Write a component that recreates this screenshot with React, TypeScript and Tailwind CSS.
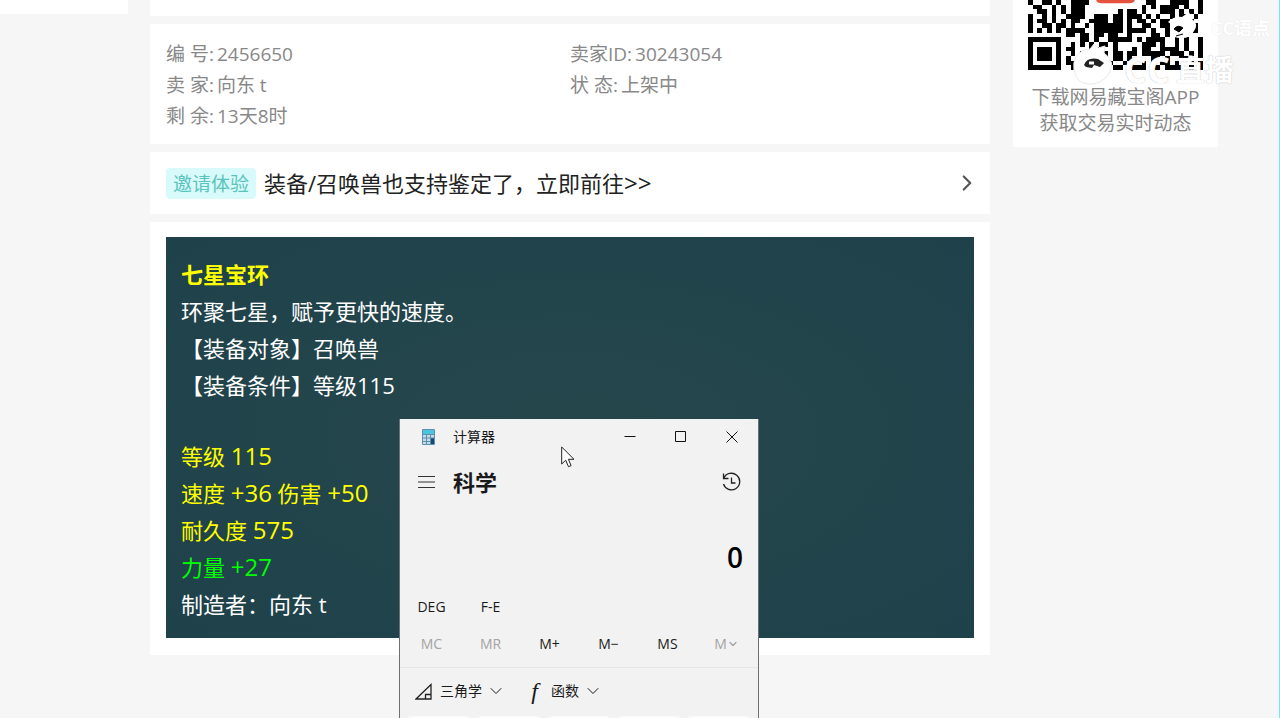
import { ChevronDown, ChevronRight } from 'lucide-react'

interface InfoItem {
  label: string
  value: string
}

const leftInfo: InfoItem[] = [
  { label: '编 号:', value: '2456650' },
  { label: '卖 家:', value: '向东 t' },
  { label: '剩 余:', value: '13天8时' },
]

const rightInfo: InfoItem[] = [
  { label: '卖家ID:', value: '30243054' },
  { label: '状 态:', value: '上架中' },
]

const memoryKeys = [
  { label: 'MC', disabled: true },
  { label: 'MR', disabled: true },
  { label: 'M+', disabled: false },
  { label: 'M−', disabled: false },
  { label: 'MS', disabled: false },
]

// Lower rows of the code, one character per module
const qrRows = [
  '#..##.#..####............##...####..#',
  '.##..#.#.###............#.#.####.#..#',
  '..##.#.#.###.......#.##.#...###.#.#.#',
  '#..#.#..####..###.##.###.#.#..#.##.#.',
  '#.##.#.#.##..####.##.#.##.#.##....#..',
  '#..##.##.#..#.######.#..##..##.#..##.',
  '#.#.#.#.####..######.####.#..#..#.##.',
  '........##.##.##.##..#....##.#.##....',
  '#######....##.#..#####.#.####..#.#..#',
  '#.....#..#.#.#.##.#.....###.#..#.#..#',
  '#.###.#.##...###..#...#.##..####.#..#',
  '#.###.#..#.###.##.##.##.#####.###.#.#',
  '#.###.#.#..##.###.##.#....##.#..##..#',
  '#.....#.###.#.####..#...#.#.##.#..#.#',
  '#######..##..###..##..###.##.####.#.#',
]

function QrCode() {
  return (
    <svg className="block w-[175px] h-[70px]" viewBox="0 0 37 15" preserveAspectRatio="none" shapeRendering="crispEdges">
      {qrRows.map((row, y) =>
        row.split('').map((cell, x) =>
          cell === '#' ? <rect key={`${x}-${y}`} x={x} y={y} width="1" height="1" fill="#000" /> : null,
        ),
      )}
      <path d="M13 0h11v.6q0 1.1-1.2 1.1h-8.6q-1.2 0-1.2-1.1z" fill="#fff" />
      <path d="M14.400 0h8.200q-.2 .7-1.200 .7h-5.800q-1 0-1.200-.7z" fill="#e5533f" shapeRendering="auto" />
    </svg>
  )
}

function Watermark() {
  return (
    <div className="absolute top-3 left-[1070px] w-[204px] h-20 pointer-events-none text-white">
      <svg className="absolute inset-0 w-full h-full" viewBox="0 0 204 80">
        <path d="M98 10q6-6 14-5l7-5 3 7q7 5 2 12-4 8-14 7-11-1-8-8 3-4-4-8z" fill="#fff" />
        <path d="M104 17q4-5 9-1l-4 4zM106 24l7-2" fill="#000" stroke="#000" />
        <path d="M4 58q-2-15 10-20l6-1 4-5 4 4 7-2-1 7q13 9 4 22-8 10-20 9-12-1-14-14z" fill="#fff" stroke="#eaeaea" strokeWidth="1" />
        <path d="M14 53q3-8 14-6l6 4-4 4-6-2-2 3-6-1z" fill="#222" />
        <path d="M19 51h5" stroke="#fff" strokeWidth="3" />
      </svg>
      <span className="absolute right-1 top-1 text-lg leading-6 font-bold [text-shadow:0_0_1px_#ddd]">CC语点</span>
      <div className="absolute left-[54px] top-[44px] flex items-center gap-1.5 font-bold whitespace-nowrap [text-shadow:0_0_1px_#aaa]">
        <span className="text-4xl leading-7">CC</span>
        <span className="text-[29px] leading-7">直播</span>
      </div>
    </div>
  )
}

function InfoList({ items }: { items: InfoItem[] }) {
  return (
    <dl>
      {items.map((item) => (
        <div key={item.label} className="flex gap-[3px]">
          <dt>{item.label}</dt>
          <dd>{item.value}</dd>
        </div>
      ))}
    </dl>
  )
}

function Num({ children }: { children: string }) {
  return <span className="text-2xl leading-none">{children}</span>
}

function ItemPanel() {
  return (
    <div className="bg-[#20424b] bg-radial from-[#25474c] to-[#1f414a] pl-[15px] pt-[19px] pb-[15px] text-[22px] leading-[37px] text-white">
      <h2 className="font-bold text-[#ffff00]">七星宝环</h2>
      <p>环聚七星，赋予更快的速度。</p>
      <p>【装备对象】召唤兽</p>
      <p>【装备条件】等级115</p>
      <div className="mt-[34px] text-[#ffff00]">
        <p>等级 <Num>115</Num></p>
        <p>速度 <Num>+36</Num> 伤害 <Num>+50</Num></p>
        <p>耐久度 <Num>575</Num></p>
      </div>
      <p className="text-[#00ff00]">力量 <Num>+27</Num></p>
      <p>制造者：向东 t</p>
    </div>
  )
}

function CalculatorIcon() {
  return (
    <svg className="w-[13px] h-4" viewBox="0 0 13 16">
      <rect width="13" height="16" rx="1" fill="#5d8fae" />
      <rect x="1" y="1" width="11" height="4" fill="#4cc3df" />
      <path d="M1 6h3v2.500H1zM5 6h3v2.500H5zM9 6h3v2.500H9zM1 9.500h3v2.500H1zM5 9.500h3v2.500H5zM1 13h3v2H1zM5 13h3v2H5z" fill="#c5dbe6" />
      <path d="M9 9.500h3V15H9z" fill="#174873" />
    </svg>
  )
}

function Calculator() {
  return (
    <section className="absolute left-[399px] top-[419px] w-[360px] bg-[#f2f2f2] border-x border-[#6a7174] text-[#1a1a1a] text-sm">
      {/* Title bar */}
      <div className="flex items-center h-9 pl-[22px] pr-px">
        <CalculatorIcon />
        <span className="ml-[18px]">计算器</span>
        <div className="flex ml-auto">
          <button className="w-[51px] h-9 flex items-center justify-center" aria-label="最小化">
            <svg className="w-3 h-3" viewBox="0 0 12 12" stroke="#111"><path d="M0.500 5.500h11" /></svg>
          </button>
          <button className="w-[51px] h-9 flex items-center justify-center" aria-label="最大化">
            <svg className="w-3 h-3" viewBox="0 0 12 12" stroke="#111" fill="none"><path d="M.5 .5h10v10H.5z" /></svg>
          </button>
          <button className="w-[51px] h-9 flex items-center justify-center" aria-label="关闭">
            <svg className="w-3 h-3" viewBox="0 0 12 12" stroke="#111"><path d="M.5 .5l11 11M11.500 .5L.5 11.500" /></svg>
          </button>
        </div>
      </div>

      {/* Mode header */}
      <div className="flex items-center h-[54px] pl-[18px] pr-4">
        <button aria-label="菜单">
          <svg className="w-[17px] h-3" viewBox="0 0 17 12" stroke="#333"><path d="M0 .5h17M0 6h17M0 11.500h17" /></svg>
        </button>
        <h1 className="ml-[18px] text-[22px] leading-8 font-bold">科学</h1>
        <button className="ml-auto" aria-label="历史记录">
          <svg className="w-5 h-5" viewBox="0 0 20 20" fill="none" stroke="#222" strokeWidth="1.300">
            <path d="M1.500 1.500v5h5M1.800 6.300A8.300 8.300 0 1 1 1.500 12M9.500 5.500V11h4" />
          </svg>
        </button>
      </div>

      <output className="block pt-7 pr-[15px] text-right text-[28px] leading-10 font-semibold text-black">0</output>

      <div className="grid grid-cols-6 px-0.5 mt-3 h-9">
        <button>DEG</button>
        <button>F-E</button>
      </div>
      <div className="grid grid-cols-6 px-0.5 h-[43px] pb-[5px] border-b border-[#e6e6e6]">
        {memoryKeys.map((key) => (
          <button key={key.label} disabled={key.disabled} className="disabled:text-[#a3a3a3]">
            {key.label}
          </button>
        ))}
        <button disabled className="flex items-center justify-center text-[#a3a3a3]">
          M<ChevronDown className="w-3 h-3" strokeWidth={2.5} />
        </button>
      </div>

      {/* Function menus */}
      <div className="flex items-center h-12 pl-[15px] pb-0.5">
        <button className="flex items-center">
          <svg className="w-[17px] h-[17px]" viewBox="0 0 17 17" fill="none" stroke="#222" strokeWidth="1.300">
            <path d="M1 16L16 1.500V16zM10.500 16v-4.500H16" />
          </svg>
          <span className="ml-2">三角学</span>
          <ChevronDown className="ml-1 w-5 h-5" strokeWidth={1.2} />
        </button>
        <button className="flex items-center ml-5">
          <span className="w-[17px] font-['Liberation_Serif',serif] italic text-2xl leading-5">f</span>
          <span className="ml-2">函数</span>
          <ChevronDown className="ml-1 w-5 h-5" strokeWidth={1.2} />
        </button>
      </div>
      <div className="grid grid-cols-5 gap-2 px-2">
        {[1, 2, 3, 4, 5].map((key) => (
          <div key={key} className="h-10 rounded-sm bg-[#fbfbfb]" />
        ))}
      </div>
    </section>
  )
}

export default function App() {
  return (
    <div className="relative h-screen overflow-hidden flex items-start bg-[#f6f6f6] font-['Open_Sans','Noto_Sans_CJK_SC',sans-serif]">
      <aside className="w-32 h-3.5 shrink-0 bg-white" />

      <main className="flex-1 min-w-0 ml-[22px] flex flex-col gap-2">
        <div className="h-4 bg-white" />
        <section className="grid grid-cols-2 px-4 pt-[15px] pb-3 bg-white text-[19px] leading-[31px] text-[#888]">
          <InfoList items={leftInfo} />
          <InfoList items={rightInfo} />
        </section>
        <a href="#" className="flex items-center h-[62px] px-4 bg-white text-[22px] text-[#222]">
          <span className="h-[31px] px-[7px] rounded bg-[#d9fafa] text-[19px] leading-[33px] text-[#58c4bd]">邀请体验</span>
          <span className="ml-2">装备/召唤兽也支持鉴定了，立即前往<Num>&gt;&gt;</Num></span>
          <ChevronRight className="ml-auto -mr-1.5 w-[26px] h-[26px] text-[#555]" strokeWidth={2} />
        </a>
        <section className="px-4 pt-[15px] pb-[17px] bg-white">
          <ItemPanel />
        </section>
      </main>

      <aside className="w-[205px] shrink-0 ml-[23px] pb-[11px] bg-white flex flex-col items-center text-center text-[19px] leading-[26px] text-[#888]">
        <QrCode />
        <p className="mt-3.5">
          下载网易藏宝阁APP
          <br />
          获取交易实时动态
        </p>
      </aside>

      <div className="w-1.5 h-screen shrink-0 ml-14 bg-[#f4f6fb] border-r border-[#7fe3e8]" />

      <Watermark />
      <Calculator />

      {/* Mouse pointer */}
      <svg className="absolute left-[561px] top-[446px] w-[14px] h-[22px]" viewBox="0 0 14 22">
        <path d="M.7 1v17l4-3.800 2.800 6.500 2.600-1.100-2.700-6.300h5.600z" fill="#fff" stroke="#222" />
      </svg>
    </div>
  )
}
